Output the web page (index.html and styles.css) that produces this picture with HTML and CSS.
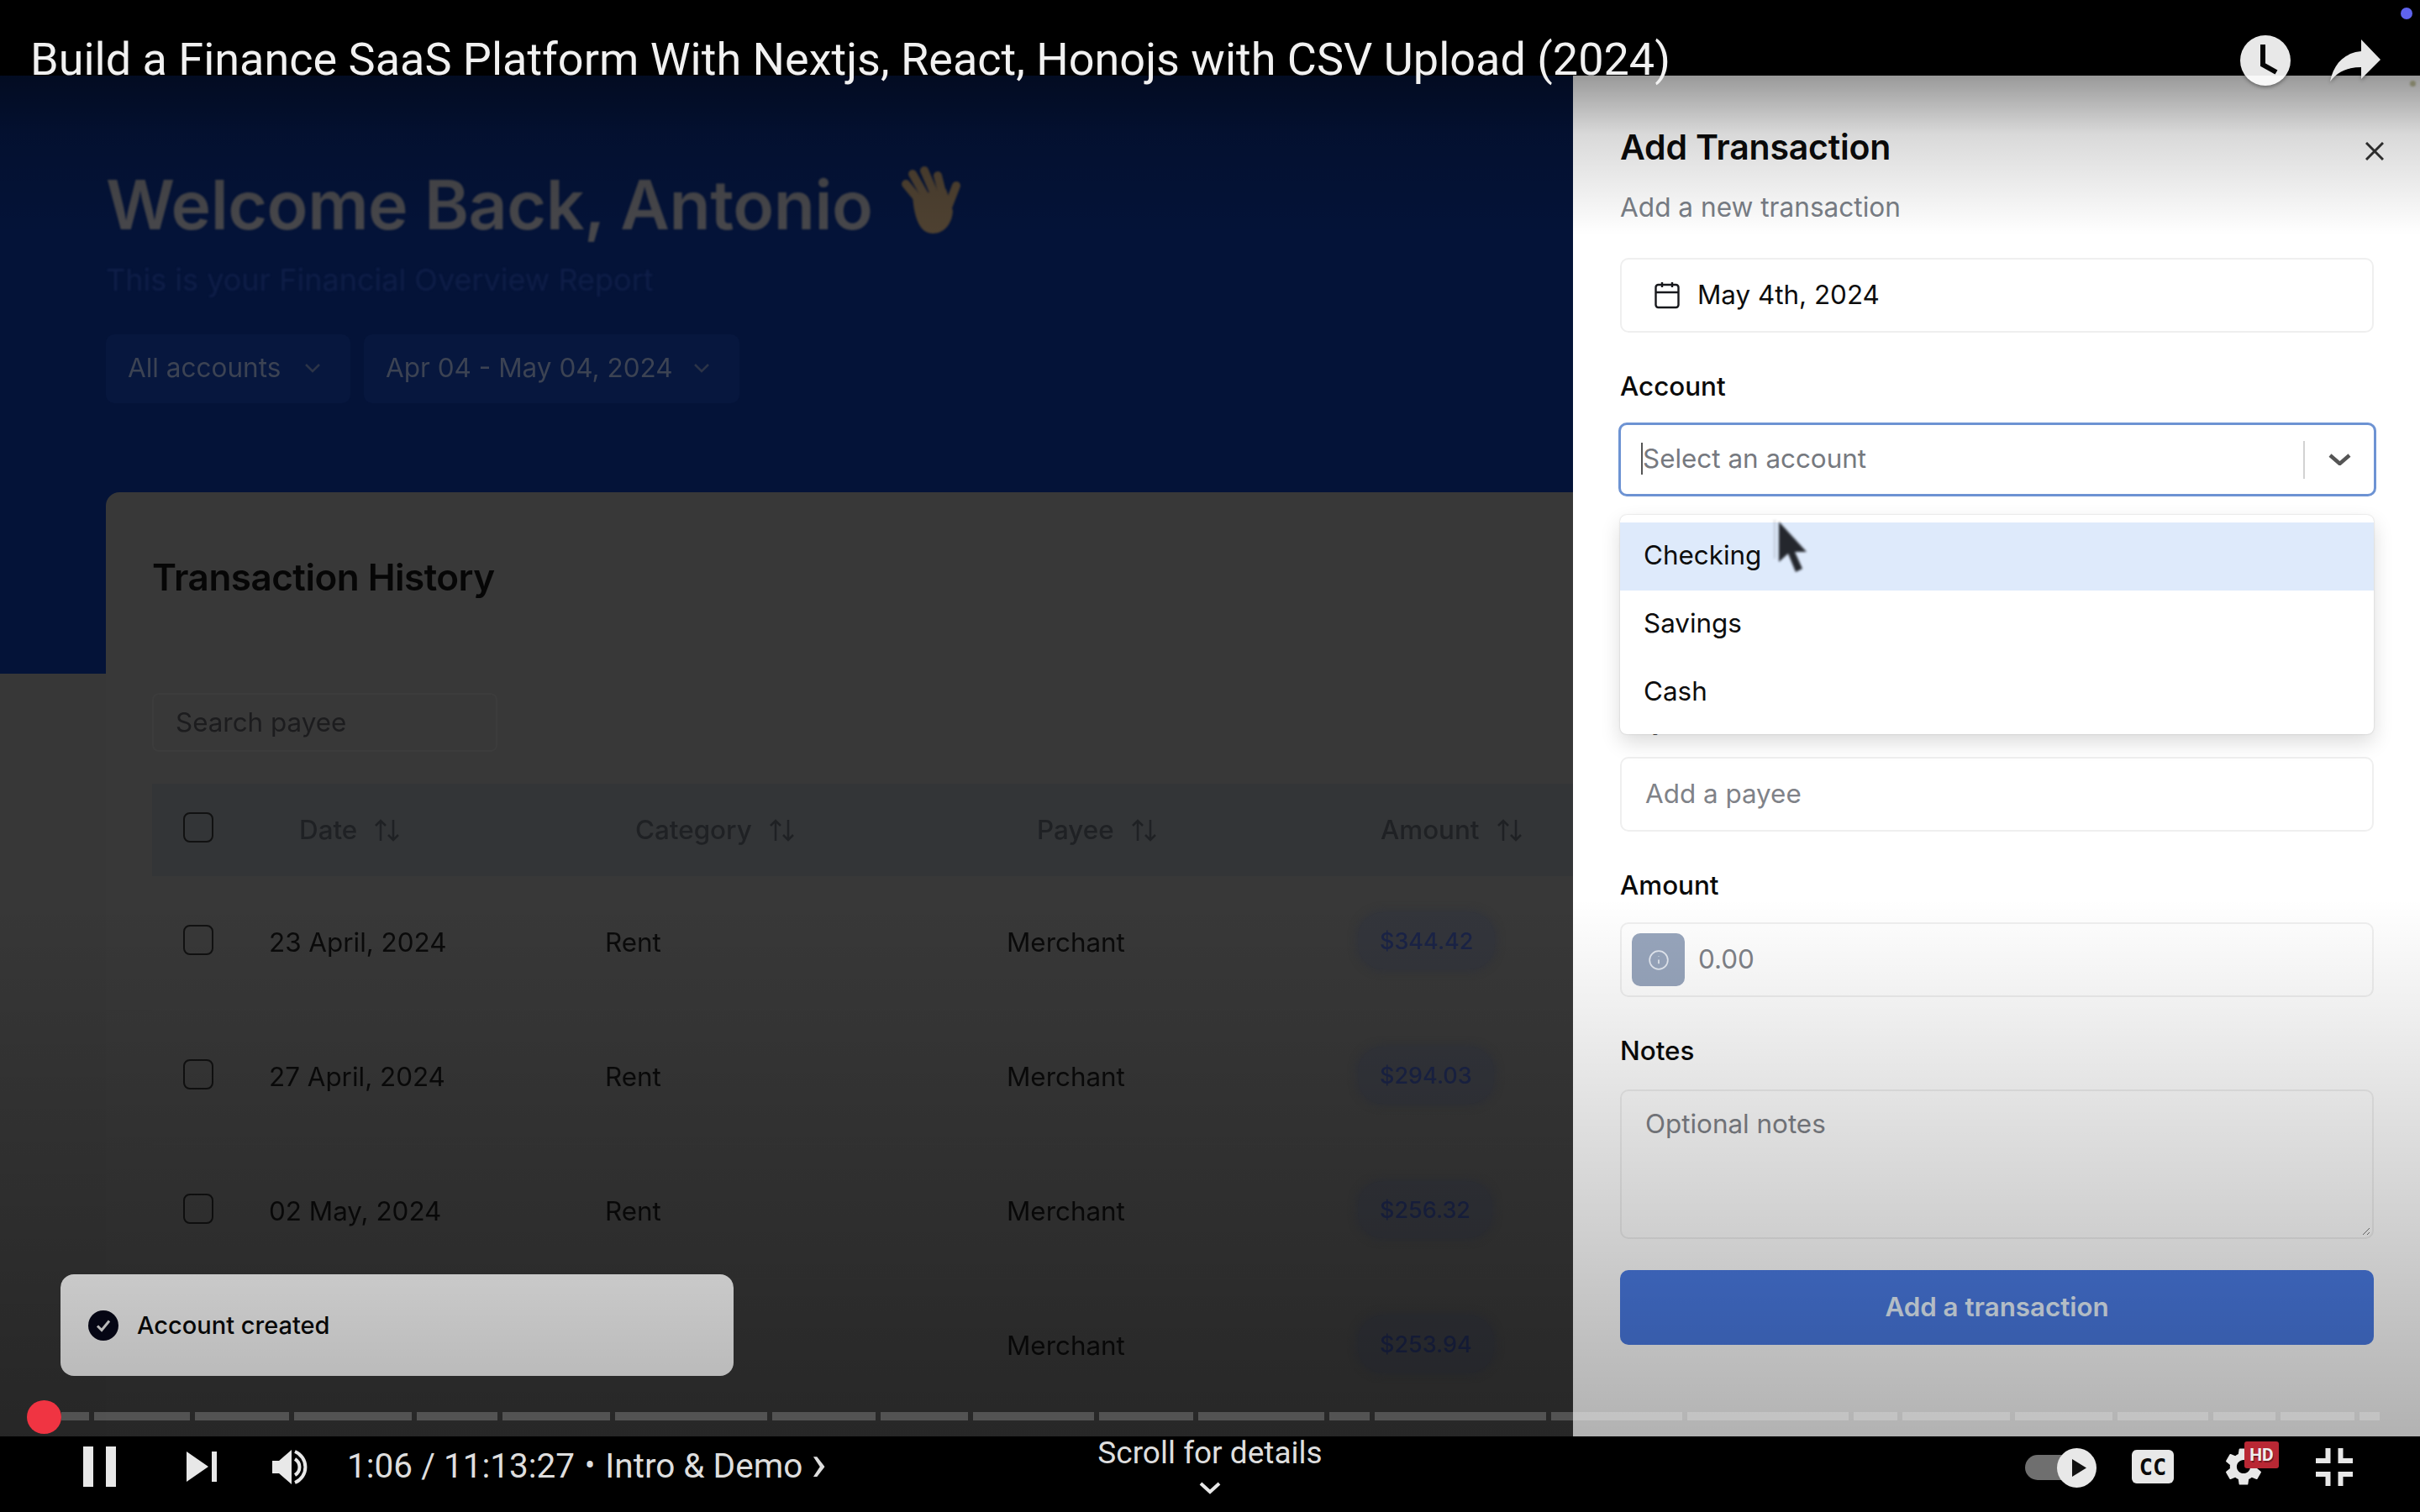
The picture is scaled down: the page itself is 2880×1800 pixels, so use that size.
FILE: index.html
```html
<!DOCTYPE html>
<html lang="en">
<head>
<meta charset="utf-8">
<title>Build a Finance SaaS Platform</title>
<link rel="stylesheet" href="styles.css">
</head>
<body>
<div class="player">
  <header class="topbar">
    <h1 class="video-title">Build a Finance SaaS Platform With Nextjs, React, Honojs with CSV Upload (2024)</h1>
    <div class="top-actions">
      <svg class="top-icon clock" viewBox="0 0 60 60" width="60" height="60">
        <defs><linearGradient id="clockFill" x1="0" y1="0" x2="0" y2="1"><stop offset=".8" stop-color="#e8e8e8"/><stop offset=".8" stop-color="#f8f8f8"/></linearGradient></defs>
        <circle cx="30" cy="30" r="30" fill="url(#clockFill)"/>
        <path d="M27 11v24l16 9" fill="none" stroke="#050505" stroke-width="6"/>
      </svg>
      <svg class="top-icon share" viewBox="0 0 60 53" width="60" height="53">
        <path d="M37 0l23 24-23 23V33C20 33 9 39 0 50 4 30 16 16 37 14z" fill="#e8e8e8"/>
      </svg>
    </div>
    <span class="rec-dot"></span>
  </header>

  <section class="video">
    <div class="dashboard">
      <div class="hero">
        <div class="welcome">
          <h2 class="welcome-title">Welcome Back, Antonio</h2>
          <svg class="wave" viewBox="0 0 76 84" width="76" height="84">
            <g fill="none" stroke="#4e4131" stroke-width="10" stroke-linecap="round">
              <path d="M26 44L8 22"/><path d="M32 38L16 10"/><path d="M42 34L30 6"/><path d="M52 36L46 12"/><path d="M58 50L68 24"/>
            </g>
            <path d="M16 36l40-8 8 26c-1 16-11 27-24 27C26 81 18 66 16 36z" fill="#4e4131"/>
          </svg>
        </div>
        <p class="welcome-sub">This is your Financial Overview Report</p>
        <div class="filters">
          <div class="filter filter-accounts"><span>All accounts</span><svg class="filter-chev" viewBox="0 0 24 14" width="24" height="14"><path d="M4 3l8 8 8-8"/></svg></div>
          <div class="filter filter-dates"><span>Apr 04 - May 04, 2024</span><svg class="filter-chev" viewBox="0 0 24 14" width="24" height="14"><path d="M4 3l8 8 8-8"/></svg></div>
        </div>
      </div>

      <div class="card">
        <h3 class="card-title">Transaction History</h3>
        <div class="search">Search payee</div>
        <div class="table">
          <div class="tr thead">
            <div class="cell cell-check"><span class="check"></span></div>
            <div class="cell th">Date<svg class="sort" viewBox="0 0 31 27" width="31" height="27"><path d="M8 26V2M2 8l6-6 6 6M23 1v24M17 19l6 6 6-6"/></svg></div>
            <div class="cell th">Category<svg class="sort" viewBox="0 0 31 27" width="31" height="27"><path d="M8 26V2M2 8l6-6 6 6M23 1v24M17 19l6 6 6-6"/></svg></div>
            <div class="cell th">Payee<svg class="sort" viewBox="0 0 31 27" width="31" height="27"><path d="M8 26V2M2 8l6-6 6 6M23 1v24M17 19l6 6 6-6"/></svg></div>
            <div class="cell th th-last">Amount<svg class="sort" viewBox="0 0 31 27" width="31" height="27"><path d="M8 26V2M2 8l6-6 6 6M23 1v24M17 19l6 6 6-6"/></svg></div>
          </div>
          <div class="tr row">
            <div class="cell cell-check"><span class="check"></span></div>
            <div class="cell">23 April, 2024</div><div class="cell">Rent</div><div class="cell">Merchant</div>
            <div class="cell"><span class="badge">$344.42</span></div>
          </div>
          <div class="tr row">
            <div class="cell cell-check"><span class="check"></span></div>
            <div class="cell">27 April, 2024</div><div class="cell">Rent</div><div class="cell">Merchant</div>
            <div class="cell"><span class="badge">$294.03</span></div>
          </div>
          <div class="tr row">
            <div class="cell cell-check"><span class="check"></span></div>
            <div class="cell">02 May, 2024</div><div class="cell">Rent</div><div class="cell">Merchant</div>
            <div class="cell"><span class="badge">$256.32</span></div>
          </div>
          <div class="tr row">
            <div class="cell cell-check"></div>
            <div class="cell"></div><div class="cell"></div><div class="cell">Merchant</div>
            <div class="cell"><span class="badge">$253.94</span></div>
          </div>
        </div>
      </div>
    </div>

    <aside class="sheet">
      <div class="sheet-head">
        <h2 class="sheet-title">Add Transaction</h2>
        <svg class="close" viewBox="0 0 22 22" width="22" height="22"><path d="M1 1l20 20M21 1L1 21"/></svg>
      </div>
      <p class="sheet-sub">Add a new transaction</p>

      <div class="field field-date">
        <svg class="cal" viewBox="0 0 24 24" width="36" height="36"><rect x="3" y="4" width="18" height="18" rx="2"/><path d="M16 2v4M8 2v4M3 10h18"/></svg>
        <span>May 4th, 2024</span>
      </div>

      <div class="group">
        <div class="label label-account">Account</div>
        <div class="combo-wrap">
          <div class="combo">
            <span class="combo-text">Select an account</span>
            <span class="combo-sep"></span>
            <svg class="combo-chev" viewBox="0 0 27 14" width="27" height="14"><path d="M2 2l11.500 10L25 2"/></svg>
          </div>
          <div class="menu">
            <div class="menu-item is-active">Checking</div>
            <div class="menu-item">Savings</div>
            <div class="menu-item">Cash</div>
          </div>
          <svg class="cursor" viewBox="0 0 44 76" width="44" height="76"><path d="M3 0v46" stroke="#8a8f98" stroke-width="2" opacity=".4"/><path d="M8 2v48l11-10 9 22 8-4-9-20h14z" fill="#15171c"/></svg>
        </div>
      </div>

      <div class="group group-payee">
        <div class="label">Payee</div>
        <div class="field placeholder">Add a payee</div>
      </div>

      <div class="group">
        <div class="label">Amount</div>
        <div class="field field-amount">
          <span class="amount-btn"><svg viewBox="0 0 24 24" width="26" height="26"><circle cx="12" cy="12" r="10"/><path d="M12 16v-4.500M12 8v-.500"/></svg></span>
          <span class="placeholder amount-value">0.00</span>
        </div>
      </div>

      <div class="group">
        <div class="label label-notes">Notes</div>
        <div class="field field-notes placeholder">Optional notes
          <svg class="resize" viewBox="0 0 10 10" width="10" height="10"><path d="M1 9l8-8M6 9l3-3"/></svg>
        </div>
      </div>

      <button class="submit">Add a transaction</button>
    </aside>

    <div class="shade"></div>
    <span class="speck"></span>

    <div class="toast">
      <svg viewBox="0 0 36 36" width="36" height="36"><circle cx="18" cy="18" r="18" fill="#07081a"/><path d="M11 18.500l5 5 9-11" fill="none" stroke="#f2f2f2" stroke-width="3"/></svg>
      <span>Account created</span>
    </div>

    <div class="progress">
      <span class="chapter" style="width:33px"></span>
      <span class="chapter" style="width:114px"></span>
      <span class="chapter" style="width:112px"></span>
      <span class="chapter" style="width:140px"></span>
      <span class="chapter" style="width:96px"></span>
      <span class="chapter" style="width:128px"></span>
      <span class="chapter" style="width:181px"></span>
      <span class="chapter" style="width:123px"></span>
      <span class="chapter" style="width:104px"></span>
      <span class="chapter" style="width:144px"></span>
      <span class="chapter" style="width:112px"></span>
      <span class="chapter" style="width:150px"></span>
      <span class="chapter" style="width:48px"></span>
      <span class="chapter" style="width:204px"></span>
      <span class="chapter" style="width:156px"></span>
      <span class="chapter" style="width:192px"></span>
      <span class="chapter" style="width:52px"></span>
      <span class="chapter" style="width:128px"></span>
      <span class="chapter" style="width:116px"></span>
      <span class="chapter" style="width:108px"></span>
      <span class="chapter" style="width:74px"></span>
      <span class="chapter" style="width:88px"></span>
      <span class="chapter" style="width:24px"></span>
      <span class="thumb"></span>
    </div>
  </section>

  <footer class="controls">
    <div class="controls-left">
      <svg class="ctl-pause" viewBox="0 0 39 48" width="39" height="48"><path d="M0 0h12v48H0zM27 0h12v48H27z"/></svg>
      <svg class="ctl-next" viewBox="0 0 36 36" width="36" height="36"><path d="M0 0l26 18L0 36zM30 0h6v36h-6z"/></svg>
      <svg class="ctl-volume" viewBox="0 0 44 41" width="44" height="41"><path d="M0 13h8L23 0v41L8 28H0z"/><path class="arc" d="M27 11a11 11 0 0 1 0 19M27 2a20 20 0 0 1 0 37"/></svg>
      <div class="time">1:06 / 11:13:27<span class="dot">•</span>Intro &amp; Demo<span class="chapter-chev">›</span></div>
    </div>
    <div class="scroll-hint">
      <span>Scroll for details</span>
      <svg viewBox="0 0 26 15" width="26" height="15"><path d="M2 2l11 10L24 2"/></svg>
    </div>
    <div class="controls-right">
      <div class="autoplay"><span class="pill"></span><span class="knob"><svg viewBox="0 0 17 21" width="17" height="21"><path d="M0 0l17 10.500L0 21z"/></svg></span></div>
      <div class="cc"><span>CC</span></div>
      <div class="gear">
        <svg viewBox="0 0 24 24" width="54" height="54"><path d="M19.140 12.940c.04-.3.06-.61.06-.94 0-.32-.02-.64-.07-.94l2.030-1.580c.18-.14.23-.41.12-.61l-1.920-3.320c-.12-.22-.37-.29-.59-.22l-2.390.96c-.5-.38-1.030-.7-1.620-.94l-.36-2.540c-.04-.24-.24-.41-.48-.41h-3.840c-.24 0-.43.17-.47.41l-.36 2.540c-.59.24-1.130.57-1.620.94l-2.390-.96c-.22-.08-.47 0-.59.22L2.740 8.870c-.12.21-.08.47.12.61l2.030 1.580c-.05.3-.09.63-.09.94s.02.64.07.94l-2.030 1.580c-.18.14-.23.41-.12.61l1.920 3.320c.12.22.37.29.59.22l2.390-.96c.5.38 1.030.7 1.620.94l.36 2.540c.05.24.24.41.48.41h3.840c.24 0 .44-.17.47-.41l.36-2.540c.59-.24 1.130-.56 1.620-.94l2.390.96c.22.08.47 0 .59-.22l1.920-3.320c.12-.22.07-.47-.12-.61l-2.010-1.580zM12 15.600c-1.980 0-3.600-1.620-3.600-3.600s1.620-3.600 3.600-3.600 3.600 1.620 3.600 3.600-1.620 3.600-3.600 3.600z"/></svg>
        <span class="hd">HD</span>
      </div>
      <svg class="exit-full" viewBox="0 0 44 45" width="44" height="45"><path d="M0 15h14.500V0M29.500 0v15H44M0 31h14.500v14M44 31H29.500v14"/></svg>
    </div>
  </footer>
</div>
</body>
</html>
```

FILE: styles.css
```css
* { box-sizing: border-box; }
html, body { margin: 0; padding: 0; background: #000; }
h1, h2, h3, p { margin: 0; font-weight: inherit; font-size: inherit; }

.player {
  width: 2880px; height: 1800px; overflow: hidden;
  display: flex; flex-direction: column;
  background: #000; font-family: "Inter", "Liberation Sans", sans-serif;
}

/* Top bar */
.topbar {
  position: relative; z-index: 5; height: 90px; flex: none;
  display: flex; justify-content: space-between; align-items: flex-start;
  padding: 0 47px 0 36px; background: #000;
}
.video-title {
  margin-top: 38px; font: 400 54px/66px "Roboto", sans-serif; color: #f1f1f1; white-space: nowrap;
}
.top-actions { display: flex; align-items: flex-start; gap: 47px; margin-top: 42px; }
.share { margin-top: 5px; }
.top-icon { overflow: visible; filter: drop-shadow(0 2px 2px rgba(0,0,0,.35)); }
.rec-dot {
  position: absolute; left: 2857px; top: 9px; width: 14px; height: 14px;
  border-radius: 50%; background: #5f63ee;
}

/* Video */
.video {
  position: relative; flex: none; height: 1620px; overflow: hidden;
  display: grid; grid-template-columns: 1872px 1008px;
}
.dashboard { background: #373737; overflow: hidden; height: 1620px; }
.hero { height: 712px; padding: 104px 0 0 126px; background: #041338; }
.welcome { display: flex; align-items: center; gap: 31px; height: 100px; filter: blur(.8px); }
.welcome-title { font-size: 80.500px; font-weight: 600; line-height: 100px; color: #47474b; letter-spacing: -.5px; white-space: nowrap; }
.wave { margin-top: -10px; }
.welcome-sub { margin-top: 17px; font-size: 36px; line-height: 44px; color: #0f1e48; filter: blur(1px); white-space: nowrap; }
.filters { display: flex; gap: 16px; margin-top: 43px; }
.filter {
  height: 82px; padding: 0 33px 3px 26px; display: flex; align-items: center; justify-content: space-between;
  background: #07173e; border-radius: 10px; color: #3c4353; font-size: 31.500px; white-space: nowrap; filter: blur(.7px);
}
.filter-accounts { width: 291px; }
.filter-dates { width: 447px; }
.filter-chev { fill: none; stroke: #2c3448; stroke-width: 2.500; flex: none; }

.card {
  margin: -216px 0 0 126px; height: 1400px; padding: 71px 0 0 55px;
  background: #383838; border-radius: 16px 0 0 0;
}
.card-title { font-size: 44px; line-height: 60px; font-weight: 600; color: #060606; letter-spacing: -.5px; filter: blur(.6px); }
.search {
  width: 411px; height: 70px; margin-top: 108px; padding-left: 26px;
  display: flex; align-items: center; border: 2px solid #3c3c3c; border-radius: 8px;
  color: #1c1c1e; font-size: 31.400px; filter: blur(.6px);
}
.table { margin-top: 38px; }
.tr { display: grid; grid-template-columns: 139px 400px 478px 418px 1fr; align-items: center; }
.thead { height: 110px; background: #333537; }
.row { height: 160px; border-bottom: 2px solid #393939; }
.cell { display: flex; align-items: center; color: #0a0a0a; font-size: 31.400px; white-space: nowrap; filter: blur(.5px); }
.cell-check { padding-left: 37px; }
.check { width: 36px; height: 36px; border: 2.500px solid #111; border-radius: 8px; margin-top: -7px; }
.th { padding-left: 36px; color: #1f2124; font-weight: 500; gap: 20px; }
.th-last { padding-left: 27px; }
.sort { fill: none; stroke: #1f2124; stroke-width: 2.500; flex: none; }
.badge {
  height: 68px; padding: 0 26px; display: flex; align-items: center;
  background: #33353b; border-radius: 30px; color: #1a2346; font-size: 27px; font-weight: 500; margin-top: -4px;
  box-shadow: 0 0 8px 3px #33353b;
}

/* Sheet */
.sheet { position: relative; height: 1620px; padding: 60px 55px 0 56px; background: #fff; }
.sheet-head { display: flex; justify-content: space-between; align-items: center; height: 50px; }
.sheet-title { font-size: 41px; font-weight: 600; line-height: 50px; color: #0b0b0b; letter-spacing: -.2px; }
.close { margin: 10px -12px 0 0; fill: none; stroke: #333; stroke-width: 3; }
.sheet-sub { margin-top: 27px; font-size: 31.600px; line-height: 40px; color: #7a7f87; }
.field {
  height: 89px; padding: 0 28px 2px; display: flex; align-items: center;
  background: #fff; border: 2px solid #efefef; border-radius: 10px;
  font-size: 31.400px; color: #0d0d0d;
}
.field-date { margin-top: 40px; padding: 0 0 1px 36px; gap: 18px; }
.cal { fill: none; stroke: #17181c; stroke-width: 1.600; flex: none; }
.group { margin-top: 44px; }
.label { height: 40px; margin-bottom: 24px; font-size: 31.400px; line-height: 40px; font-weight: 500; color: #0a0a0a; }
.label-account { margin-bottom: 23px; }
.label-notes { margin-bottom: 26px; }
.group-payee { margin-top: 246px; }
.placeholder { color: #7f8288; }
.combo-wrap { position: relative; }
.combo {
  height: 88px; margin: 0 -3px 0 -2px; padding: 0 27px 3px 24px; display: flex; align-items: center;
  border: 3px solid #6d93d3; border-radius: 10px; background: #fff;
  font-size: 31.400px; color: #76797f;
}
.combo-text { flex: 1; border-left: 2px solid #555; line-height: 38px; }
.combo-sep { width: 2px; height: 45px; background: #d2d2d2; margin-right: 28px; margin-top: 3px; }
.combo-chev { fill: none; stroke: #555; stroke-width: 4.500; flex: none; margin-top: 3px; }
.menu {
  position: absolute; z-index: 2; left: 0; right: 0; top: 110px; padding: 9px 0; height: 261px;
  background: #fff; border-radius: 8px;
  box-shadow: 0 0 2px rgba(0,0,0,.2), 0 10px 24px rgba(0,0,0,.14);
}
.menu-item { height: 81px; padding: 0 0 4px 28px; display: flex; align-items: center; font-size: 31.400px; color: #0d0d0d; }
.is-active { background: #deeafb; }
.cursor { position: absolute; z-index: 3; left: 181px; top: 116px; filter: blur(1.500px); opacity: .92; }
.field-amount { padding: 0 0 0 12px; gap: 16px; }
.amount-value { margin-top: -1px; }
.amount-btn {
  width: 63px; height: 63px; border-radius: 10px; background: #98a6bd;
  display: flex; align-items: center; justify-content: center; flex: none;
}
.amount-btn svg { fill: none; stroke: #e4e9f1; stroke-width: 1.600; }
.field-notes { position: relative; height: 178px; align-items: flex-start; padding-top: 19px; line-height: 40px; }
.resize { position: absolute; right: 2px; bottom: 2px; fill: none; stroke: #777; stroke-width: 1; }
.submit {
  display: block; width: 100%; height: 89px; margin-top: 37px; padding: 0 0 1px; border: 0; border-radius: 10px;
  background: #4a7be4; color: #e8f4ff; font: 600 31.300px "Inter", sans-serif;
}

/* Overlays */
.shade {
  position: absolute; inset: 0; z-index: 1; pointer-events: none;
  background: linear-gradient(to bottom, rgba(0,0,0,.4) 0, rgba(0,0,0,.15) 70px, rgba(0,0,0,0) 190px, rgba(0,0,0,0) 980px, rgba(0,0,0,.3) 1620px);
}
.speck {
  position: absolute; z-index: 2; left: 2868px; top: 6px; width: 7px; height: 7px;
  border-radius: 50%; background: #7f7f66; filter: blur(1px);
}
.toast {
  position: absolute; z-index: 0; left: 72px; bottom: 72px; width: 801px; height: 121px;
  display: flex; align-items: center; gap: 22px; padding: 0 0 0 33px;
  background: #fff; border-radius: 16px; font-size: 29px; font-weight: 500; color: #0a0a0a;
}
.progress {
  position: absolute; z-index: 2; left: 0; right: 0; bottom: 19px; height: 10px;
  display: flex; gap: 6px; padding-left: 73px;
}
.chapter { height: 10px; background: rgba(255,255,255,.2); flex: none; }
.thumb {
  position: absolute; left: 32px; top: -14px; width: 41px; height: 40px;
  border-radius: 50%; background: #f03442;
}

/* Controls */
.controls {
  flex: 1; height: 90px; display: grid; grid-template-columns: 1fr auto 1fr;
  padding-bottom: 18px; background: #000; color: #e2e2e2; font-family: "Roboto", sans-serif;
}
.controls-left { display: flex; align-items: center; padding-left: 99px; }
.ctl-pause { fill: #e8e8e8; margin-right: 84px; }
.ctl-next { fill: #e8e8e8; margin-right: 66px; }
.ctl-volume { fill: #e8e8e8; margin-right: 45px; }
.ctl-volume .arc { fill: none; stroke: #e8e8e8; stroke-width: 4; }
.time { display: flex; align-items: center; font-size: 40.500px; line-height: 50px; margin-top: -2px; white-space: nowrap; color: #dedede; }
.dot { font-size: 36px; margin: 0 12px 0 12px; }
.chapter-chev { font-size: 62px; line-height: 44px; margin-left: 10px; margin-top: -6px; }
.scroll-hint { display: flex; flex-direction: column; align-items: center; font-size: 37px; line-height: 40px; color: #dedede; }
.scroll-hint svg { margin-top: 14px; fill: none; stroke: #e8e8e8; stroke-width: 4; }
.controls-right { display: flex; align-items: center; justify-content: flex-end; padding-right: 80px; }
.autoplay { position: relative; width: 85px; height: 47px; margin-right: 42px; margin-top: 2px; }
.pill { position: absolute; left: 0; top: 8px; width: 62px; height: 30px; border-radius: 15px; background: #6f6f6f; }
.knob {
  position: absolute; right: 0; top: 0; width: 47px; height: 47px; border-radius: 50%;
  background: #e8e8e8; display: flex; align-items: center; justify-content: center; padding-left: 5px;
}
.knob svg { fill: #111; }
.cc {
  width: 50px; height: 40px; margin-right: 56px; border-radius: 6px; background: #e8e8e8;
  display: flex; align-items: center; justify-content: center;
  font: 700 27px/1 "DejaVu Sans Mono", monospace; color: #0a0a0a; letter-spacing: 0;
}
.gear { position: relative; width: 54px; height: 54px; margin-right: 59px; }
.gear svg { display: block; fill: #e8e8e8; }
.hd {
  position: absolute; left: 28px; top: -3px; width: 41px; height: 32px;
  display: flex; align-items: center; justify-content: center;
  background: #b92834; border-radius: 3px; color: #eee; font: 700 21px "Roboto", sans-serif;
  text-shadow: 1px 2px 0 rgba(0,0,0,.35);
}
.exit-full { fill: none; stroke: #e8e8e8; stroke-width: 6; }
```
